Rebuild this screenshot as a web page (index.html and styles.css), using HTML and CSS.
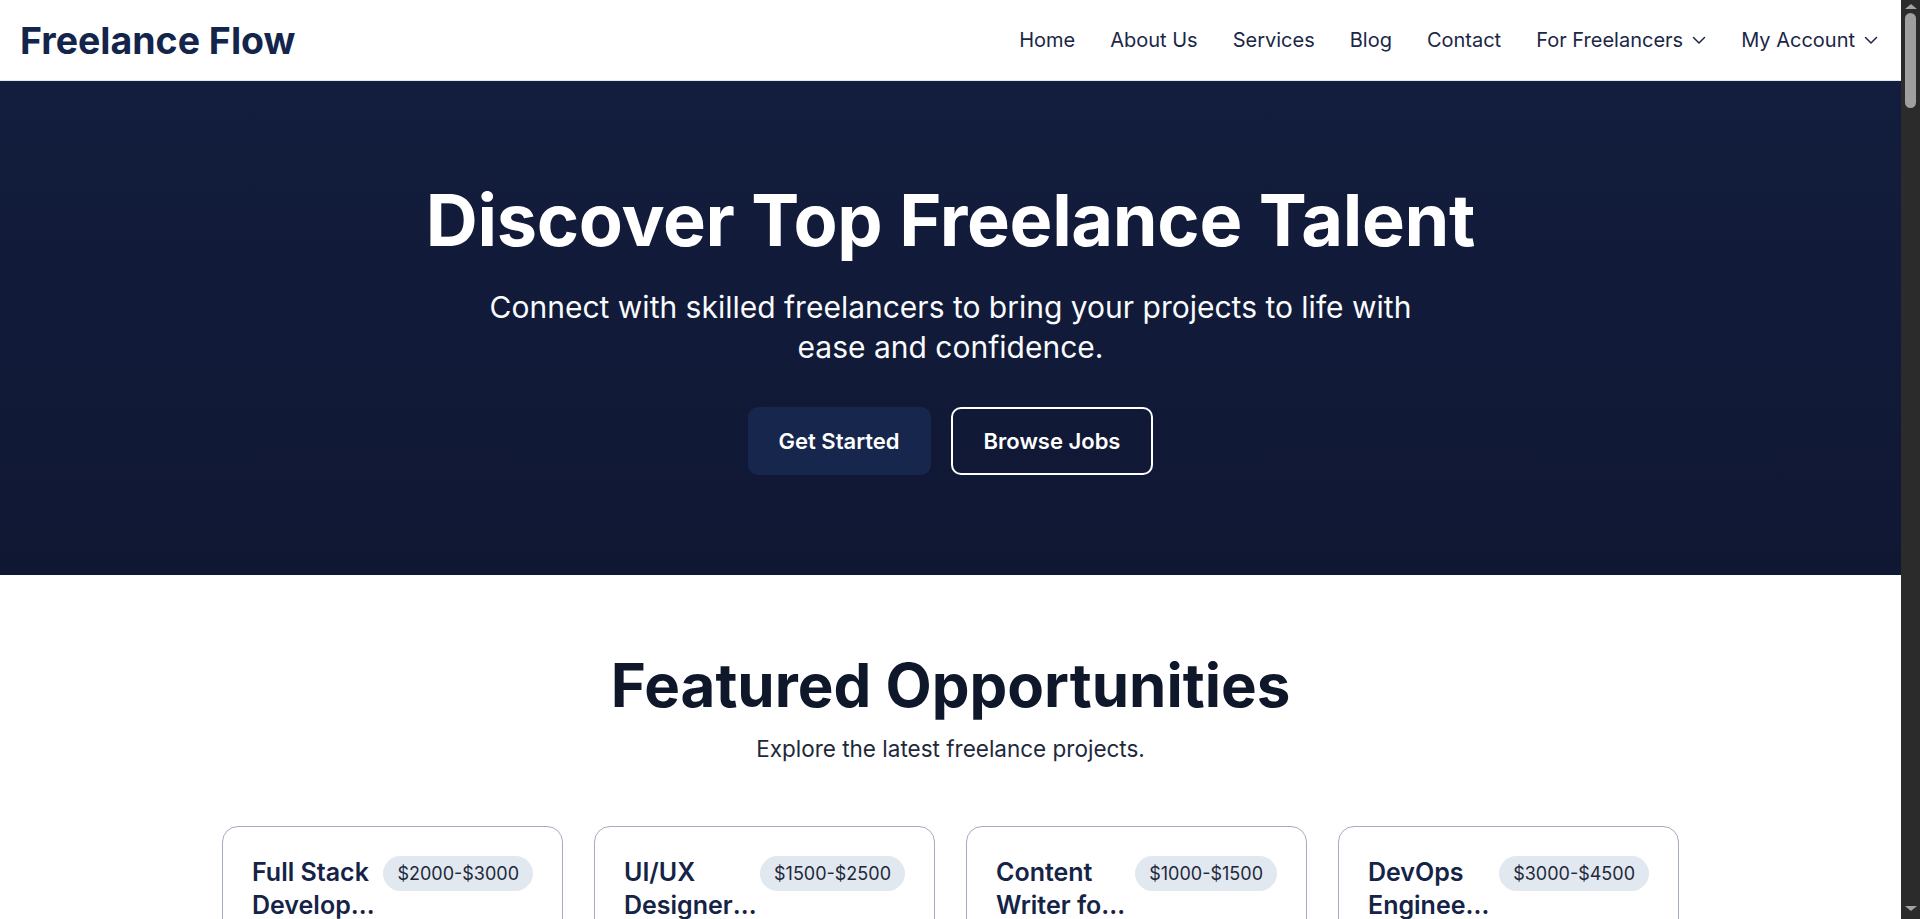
FILE: index.html
```html
<!DOCTYPE html>
<html lang="en">
<head>
<meta charset="utf-8">
<title>Freelance Flow</title>
<link rel="stylesheet" href="styles.css">
</head>
<body>
<div class="page">
<header class="site-header">
  <a class="logo" href="#">Freelance Flow</a>
  <nav class="main-nav">
    <a href="#">Home</a>
    <a href="#">About Us</a>
    <a href="#">Services</a>
    <a href="#">Blog</a>
    <a href="#">Contact</a>
    <button class="nav-dropdown" type="button">For Freelancers
      <svg class="chevron" width="14" height="9" viewBox="0 0 14 9" aria-hidden="true"><polyline points="1.5,1.5 7,7 12.5,1.5" fill="none" stroke="currentColor" stroke-width="1.5" stroke-linecap="round" stroke-linejoin="round"/></svg>
    </button>
    <button class="nav-dropdown" type="button">My Account
      <svg class="chevron" width="14" height="9" viewBox="0 0 14 9" aria-hidden="true"><polyline points="1.5,1.5 7,7 12.5,1.5" fill="none" stroke="currentColor" stroke-width="1.5" stroke-linecap="round" stroke-linejoin="round"/></svg>
    </button>
  </nav>
</header>

<main>
  <section class="hero">
    <h1 class="hero-title">Discover Top Freelance Talent</h1>
    <p class="hero-sub">Connect with skilled freelancers to bring your projects to life with ease and confidence.</p>
    <div class="hero-actions">
      <a class="btn btn-primary" href="#">Get Started</a>
      <a class="btn btn-outline" href="#">Browse Jobs</a>
    </div>
  </section>

  <section class="featured">
    <h2 class="section-title">Featured Opportunities</h2>
    <p class="section-sub">Explore the latest freelance projects.</p>
    <div class="job-grid">
      <article class="job-card">
        <div class="job-head">
          <h3 class="job-title">Full Stack Developer Needed</h3>
          <span class="badge">$2000-$3000</span>
        </div>
        <p class="job-desc">Build and maintain a modern web application using React and Node.js for a growing startup.</p>
        <div class="tags"><span>React</span><span>Node.js</span><span>MongoDB</span></div>
        <a class="job-link" href="#">View Details</a>
      </article>
      <article class="job-card">
        <div class="job-head">
          <h3 class="job-title">UI/UX Designer for Mobile App</h3>
          <span class="badge">$1500-$2500</span>
        </div>
        <p class="job-desc">Design intuitive interfaces and user flows for a fitness tracking mobile application.</p>
        <div class="tags"><span>Figma</span><span>Prototyping</span><span>UX Research</span></div>
        <a class="job-link" href="#">View Details</a>
      </article>
      <article class="job-card">
        <div class="job-head">
          <h3 class="job-title">Content Writer for Tech Blog</h3>
          <span class="badge">$1000-$1500</span>
        </div>
        <p class="job-desc">Write engaging, well-researched articles about software development and emerging technology.</p>
        <div class="tags"><span>Writing</span><span>SEO</span><span>Tech</span></div>
        <a class="job-link" href="#">View Details</a>
      </article>
      <article class="job-card">
        <div class="job-head">
          <h3 class="job-title">DevOps Engineer for Cloud Migration</h3>
          <span class="badge">$3000-$4500</span>
        </div>
        <p class="job-desc">Set up CI/CD pipelines and manage cloud infrastructure on AWS for a SaaS platform.</p>
        <div class="tags"><span>AWS</span><span>Docker</span><span>Kubernetes</span></div>
        <a class="job-link" href="#">View Details</a>
      </article>
    </div>
  </section>

  <section class="steps">
    <h2 class="section-title">How It Works</h2>
    <p class="section-sub">Three simple steps to get your project moving.</p>
    <div class="step-grid">
      <div class="step"><span class="step-num">1</span><h3>Post a Project</h3><p>Describe what you need and set your budget in minutes.</p></div>
      <div class="step"><span class="step-num">2</span><h3>Choose a Freelancer</h3><p>Review proposals, portfolios and ratings from skilled talent.</p></div>
      <div class="step"><span class="step-num">3</span><h3>Get It Done</h3><p>Collaborate, track progress and pay securely when satisfied.</p></div>
    </div>
  </section>

  <section class="categories">
    <h2 class="section-title">Popular Categories</h2>
    <p class="section-sub">Find experts across every discipline.</p>
    <div class="cat-grid">
      <div class="cat">Web Development</div>
      <div class="cat">Graphic Design</div>
      <div class="cat">Writing &amp; Translation</div>
      <div class="cat">Digital Marketing</div>
      <div class="cat">Video &amp; Animation</div>
      <div class="cat">Data Science</div>
      <div class="cat">Mobile Apps</div>
      <div class="cat">Customer Support</div>
    </div>
  </section>

  <section class="talent">
    <h2 class="section-title">Top Freelancers</h2>
    <p class="section-sub">Meet some of our highest-rated professionals.</p>
    <div class="cat-grid">
      <div class="profile"><span class="avatar">AL</span><h3>Alex Lee</h3><p>Full Stack Developer</p></div>
      <div class="profile"><span class="avatar">MR</span><h3>Maria Rossi</h3><p>Brand Designer</p></div>
      <div class="profile"><span class="avatar">DK</span><h3>David Kim</h3><p>Data Analyst</p></div>
      <div class="profile"><span class="avatar">NP</span><h3>Nina Patel</h3><p>Copywriter</p></div>
      <div class="profile"><span class="avatar">TB</span><h3>Tom Baker</h3><p>Mobile Engineer</p></div>
      <div class="profile"><span class="avatar">LS</span><h3>Lena Schultz</h3><p>SEO Specialist</p></div>
      <div class="profile"><span class="avatar">OC</span><h3>Omar Chen</h3><p>Video Editor</p></div>
      <div class="profile"><span class="avatar">EG</span><h3>Emma Grant</h3><p>Virtual Assistant</p></div>
    </div>
  </section>

  <section class="testimonials">
    <h2 class="section-title">What Our Clients Say</h2>
    <p class="section-sub">Trusted by thousands of businesses worldwide.</p>
    <div class="quote-grid">
      <blockquote class="quote"><p>“Freelance Flow helped us find an amazing developer within days.”</p><cite>Sarah M., Product Lead</cite></blockquote>
      <blockquote class="quote"><p>“The quality of talent on this platform is outstanding.”</p><cite>James K., Founder</cite></blockquote>
      <blockquote class="quote"><p>“Simple, fast and reliable. Our go-to for every project.”</p><cite>Priya S., Marketing Director</cite></blockquote>
    </div>
  </section>

  <section class="faq">
    <h2 class="section-title">Frequently Asked Questions</h2>
    <p class="section-sub">Everything you need to know about Freelance Flow.</p>
    <div class="faq-list">
      <details class="faq-item" open><summary>How do I post a project?</summary><p>Create an account, click “Post a Project” and describe your requirements and budget.</p></details>
      <details class="faq-item" open><summary>How are freelancers vetted?</summary><p>Every freelancer completes identity verification and a skills review before joining.</p></details>
      <details class="faq-item" open><summary>How do payments work?</summary><p>Funds are held securely and released when you approve the delivered work.</p></details>
      <details class="faq-item" open><summary>Can I hire for long-term work?</summary><p>Yes, you can set up hourly or fixed-price contracts of any length.</p></details>
      <details class="faq-item" open><summary>What fees do you charge?</summary><p>Posting is free. A small service fee applies to completed contracts.</p></details>
      <details class="faq-item" open><summary>How do I become a freelancer?</summary><p>Sign up, build your profile and start sending proposals to clients.</p></details>
    </div>
  </section>

  <section class="cta">
    <h2 class="cta-title">Ready to start your next project?</h2>
    <p class="cta-sub">Join thousands of clients and freelancers working together.</p>
    <a class="btn btn-primary" href="#">Join Now</a>
  </section>
</main>

<footer class="site-footer">
  <div class="footer-cols">
    <div><h4>Freelance Flow</h4><p>Connecting talent with opportunity.</p></div>
    <div><h4>Company</h4><a href="#">About Us</a><a href="#">Careers</a><a href="#">Blog</a></div>
    <div><h4>Support</h4><a href="#">Help Center</a><a href="#">Contact</a><a href="#">Privacy Policy</a></div>
  </div>
  <p class="copyright">© 2024 Freelance Flow. All rights reserved.</p>
</footer>
</div>
<div class="scrollbar" aria-hidden="true">
  <span class="sb-arrow sb-up"></span>
  <span class="sb-thumb"></span>
  <span class="sb-space"></span>
  <span class="sb-arrow sb-down"></span>
</div>
</body>
</html>
```

FILE: styles.css
```css
* { box-sizing: border-box; }

body {
  margin: 0;
  display: flex;
  align-items: flex-start;
  font-family: Inter, "Noto Sans", sans-serif;
  color: #0f172a;
  background: #ffffff;
}

.page {
  flex: 1;
  min-width: 0;
  background: #ffffff;
}

/* Window scrollbar */
.scrollbar {
  position: sticky;
  top: 0;
  flex-shrink: 0;
  width: 19px;
  height: 100vh;
  background: #2b2b2b;
  display: flex;
  flex-direction: column;
  align-items: center;
  padding: 4px 0 8px;
}

.sb-arrow {
  width: 0;
  height: 0;
  border-left: 6px solid transparent;
  border-right: 6px solid transparent;
}

.sb-up { border-bottom: 5px solid #a3a3a3; }
.sb-down { border-top: 5px solid #a3a3a3; }

.sb-thumb {
  margin-top: 4px;
  width: 11px;
  height: 95px;
  border-radius: 6px;
  background: #9f9f9f;
}

.sb-space { flex: 1; }

/* Header */
.site-header {
  height: 81px;
  display: flex;
  align-items: center;
  justify-content: space-between;
  padding: 0 23px 0 20px;
  background: #ffffff;
  border-bottom: 1px solid #e2e8f0;
}

.logo {
  font-size: 37.5px;
  font-weight: 700;
  color: #14254b;
  text-decoration: none;
}

.main-nav {
  display: flex;
  align-items: center;
  gap: 35px;
}

.main-nav a,
.nav-dropdown {
  font-family: inherit;
  font-size: 20px;
  color: #1a2747;
  text-decoration: none;
}

.nav-dropdown {
  display: flex;
  align-items: center;
  gap: 9px;
  padding: 0;
  border: 0;
  background: none;
  cursor: pointer;
}

.chevron { display: block; }

/* Hero */
.hero {
  background: linear-gradient(180deg, #131d3d 0%, #0f1733 100%);
  padding: 96px 24px 100px;
  text-align: center;
  color: #ffffff;
}

.hero-title {
  font-size: 72px;
  font-weight: 700;
  line-height: 1.2;
  letter-spacing: -0.3px;
  margin: 0 0 24px;
}

.hero-sub {
  font-size: 30px;
  line-height: 40px;
  max-width: 960px;
  margin: 0 auto 40px;
  color: #f8fafc;
}

.hero-actions {
  display: flex;
  justify-content: center;
  gap: 20px;
}

.btn {
  display: inline-block;
  font-size: 22px;
  font-weight: 600;
  line-height: 28px;
  padding: 20px 31px;
  border-radius: 10px;
  text-decoration: none;
  color: #ffffff;
}

.btn-primary { background: #16264d; }

.btn-outline {
  border: 2px solid #ffffff;
  padding: 18px 31px;
}

/* Sections */
.featured,
.steps,
.categories,
.talent,
.testimonials,
.faq {
  padding: 74px 24px 96px;
  text-align: center;
}

.section-title {
  font-size: 60px;
  font-weight: 700;
  line-height: 1.2;
  margin: 0 0 13px;
  color: #0f172a;
}

.section-sub {
  font-size: 22.5px;
  line-height: 30px;
  margin: 0 0 62px;
  color: #1e293b;
}

.job-grid {
  display: grid;
  grid-template-columns: repeat(4, 1fr);
  gap: 31px;
  max-width: 1457px;
  margin: 0 auto;
  text-align: left;
}

.job-card {
  border: 1px solid #a3adbf;
  border-radius: 16px;
  padding: 29px;
  display: flex;
  flex-direction: column;
  gap: 20px;
}

.job-head {
  display: flex;
  justify-content: space-between;
  align-items: flex-start;
  gap: 3px;
}

.job-title {
  margin: 0;
  font-size: 25px;
  font-weight: 600;
  line-height: 33px;
  color: #152347;
  display: -webkit-box;
  -webkit-line-clamp: 2;
  -webkit-box-orient: vertical;
  overflow: hidden;
}

.badge {
  flex-shrink: 0;
  white-space: nowrap;
  background: #e2e8f0;
  border-radius: 999px;
  padding: 4px 14px;
  font-size: 18px;
  line-height: 27px;
  color: #1e293b;
}

.job-desc {
  margin: 0;
  font-size: 18px;
  line-height: 28px;
  color: #334155;
}

.tags {
  display: flex;
  flex-wrap: wrap;
  gap: 8px;
}

.tags span {
  background: #f1f5f9;
  border-radius: 6px;
  padding: 4px 10px;
  font-size: 15px;
  color: #334155;
}

.job-link {
  align-self: flex-start;
  background: #16264d;
  color: #ffffff;
  text-decoration: none;
  font-weight: 600;
  font-size: 17px;
  padding: 12px 22px;
  border-radius: 8px;
}

.steps,
.testimonials { background: #f8fafc; }

.step-grid,
.quote-grid {
  display: grid;
  grid-template-columns: repeat(3, 1fr);
  gap: 32px;
  max-width: 1457px;
  margin: 0 auto;
}

.step {
  background: #ffffff;
  border: 1px solid #e2e8f0;
  border-radius: 16px;
  padding: 48px 32px;
}

.step-num {
  display: inline-flex;
  align-items: center;
  justify-content: center;
  width: 56px;
  height: 56px;
  border-radius: 50%;
  background: #16264d;
  color: #ffffff;
  font-size: 24px;
  font-weight: 700;
}

.step h3 { font-size: 26px; margin: 24px 0 12px; color: #152347; }
.step p { font-size: 18px; line-height: 28px; color: #334155; margin: 0; }

.cat-grid {
  display: grid;
  grid-template-columns: repeat(4, 1fr);
  gap: 24px;
  max-width: 1457px;
  margin: 0 auto;
}

.cat {
  border: 1px solid #cbd5e1;
  border-radius: 14px;
  padding: 56px 24px;
  font-size: 22px;
  font-weight: 600;
  color: #152347;
}

.profile {
  border: 1px solid #e2e8f0;
  border-radius: 16px;
  padding: 40px 24px;
}

.avatar {
  display: inline-flex;
  align-items: center;
  justify-content: center;
  width: 96px;
  height: 96px;
  border-radius: 50%;
  background: #e2e8f0;
  color: #16264d;
  font-size: 30px;
  font-weight: 700;
}

.profile h3 { font-size: 22px; margin: 20px 0 6px; color: #152347; }
.profile p { margin: 0; font-size: 17px; color: #475569; }

.quote {
  margin: 0;
  background: #ffffff;
  border: 1px solid #e2e8f0;
  border-radius: 16px;
  padding: 48px 36px;
  text-align: left;
}

.quote p { font-size: 20px; line-height: 32px; margin: 0 0 24px; color: #1e293b; }
.quote cite { font-style: normal; font-weight: 600; color: #152347; }

.faq-list {
  max-width: 960px;
  margin: 0 auto;
  text-align: left;
  display: flex;
  flex-direction: column;
  gap: 16px;
}

.faq-item {
  border: 1px solid #cbd5e1;
  border-radius: 12px;
  padding: 28px 32px;
}

.faq-item summary { font-size: 22px; font-weight: 600; color: #152347; cursor: pointer; }
.faq-item p { margin: 14px 0 0; font-size: 18px; line-height: 28px; color: #334155; }

.cta {
  background: linear-gradient(180deg, #131d3d 0%, #0f1733 100%);
  color: #ffffff;
  text-align: center;
  padding: 140px 24px;
}

.cta-title { font-size: 52px; margin: 0 0 16px; }
.cta-sub { font-size: 22px; margin: 0 0 40px; color: #e2e8f0; }

.site-footer {
  background: #0b1229;
  color: #cbd5e1;
  padding: 96px 24px 64px;
}

.footer-cols {
  display: grid;
  grid-template-columns: 2fr 1fr 1fr;
  gap: 48px;
  max-width: 1457px;
  margin: 0 auto;
}

.footer-cols h4 { font-size: 20px; color: #ffffff; margin: 0 0 16px; }
.footer-cols a { display: block; color: #cbd5e1; text-decoration: none; margin-bottom: 10px; }
.copyright { text-align: center; margin-top: 64px; font-size: 15px; }
```
